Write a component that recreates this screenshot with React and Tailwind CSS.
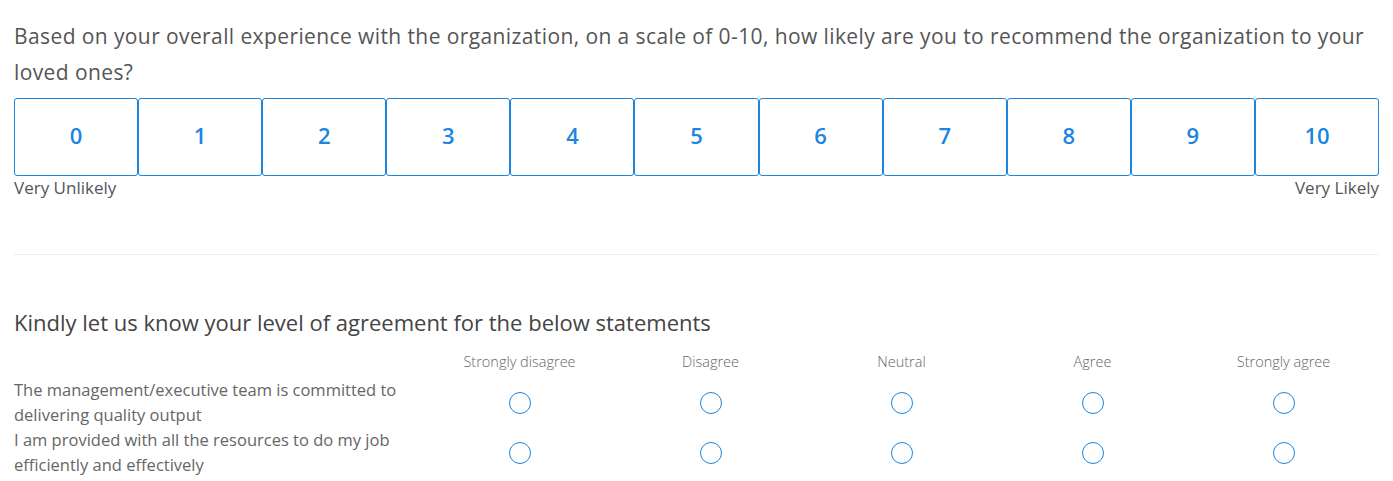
import React, { useState } from 'react';

const scale = [0, 1, 2, 3, 4, 5, 6, 7, 8, 9, 10];
const options = ['Strongly disagree', 'Disagree', 'Neutral', 'Agree', 'Strongly agree'];
const statements = [
  'The management/executive team is committed to delivering quality output',
  'I am provided with all the resources to do my job efficiently and effectively',
];

const App = () => {
  const [score, setScore] = useState(null);
  const [answers, setAnswers] = useState({});

  return (
    <div className="min-h-screen bg-white px-[14px] pt-[18px] text-[#555]" style={{ fontFamily: '"Open Sans", "Noto Sans", sans-serif' }}>
      {/* NPS question */}
      <p className="text-[21px] leading-[36px] tracking-[0.4px] text-[#555]">
        Based on your overall experience with the organization, on a scale of 0-10, how likely are you to recommend the organization to your loved ones?
      </p>
      <div className="mt-[8px] flex">
        {scale.map((n) => (
          <button
            key={n}
            type="button"
            onClick={() => setScore(n)}
            className={`h-[78px] flex-1 rounded-[3px] border border-[#1a86e0] pb-[4px] text-[22px] font-semibold ${score === n ? 'bg-[#1a86e0] text-white' : 'bg-white text-[#1a86e0]'}`}
          >
            {n}
          </button>
        ))}
      </div>
      <div className="flex justify-between text-[17px] leading-[24px] text-[#555]">
        <span>Very Unlikely</span>
        <span>Very Likely</span>
      </div>

      <div className="mt-[54px] border-t border-[#ececec]"></div>

      {/* Matrix question */}
      <h3 className="mt-[52px] text-[22px] leading-[30px] text-[#444]">
        Kindly let us know your level of agreement for the below statements
      </h3>
      <div className="mt-[15px] grid grid-cols-[410px_repeat(5,1fr)]">
        <div></div>
        {options.map((o) => (
          <div key={o} className="text-center text-[14.5px] font-light leading-[20px] text-[#666]">{o}</div>
        ))}
        {statements.map((s, i) => (
          <React.Fragment key={i}>
            <div className={`${i === 0 ? 'mt-[5px]' : ''} pr-[6px] text-[16.5px] leading-[25px] text-[#666]`}>{s}</div>
            {options.map((o, j) => (
              <div key={o} className={`${i === 0 ? 'mt-[5px]' : ''} flex items-center justify-center pt-[2px]`}>
                <button
                  type="button"
                  onClick={() => setAnswers((prev) => ({ ...prev, [i]: j }))}
                  className="flex h-[22px] w-[22px] items-center justify-center rounded-full border-[1.5px] border-[#1a86e0] bg-white"
                >
                  {answers[i] === j && <span className="h-[12px] w-[12px] rounded-full bg-[#1a86e0]"></span>}
                </button>
              </div>
            ))}
          </React.Fragment>
        ))}
      </div>
    </div>
  );
};

export default App;
